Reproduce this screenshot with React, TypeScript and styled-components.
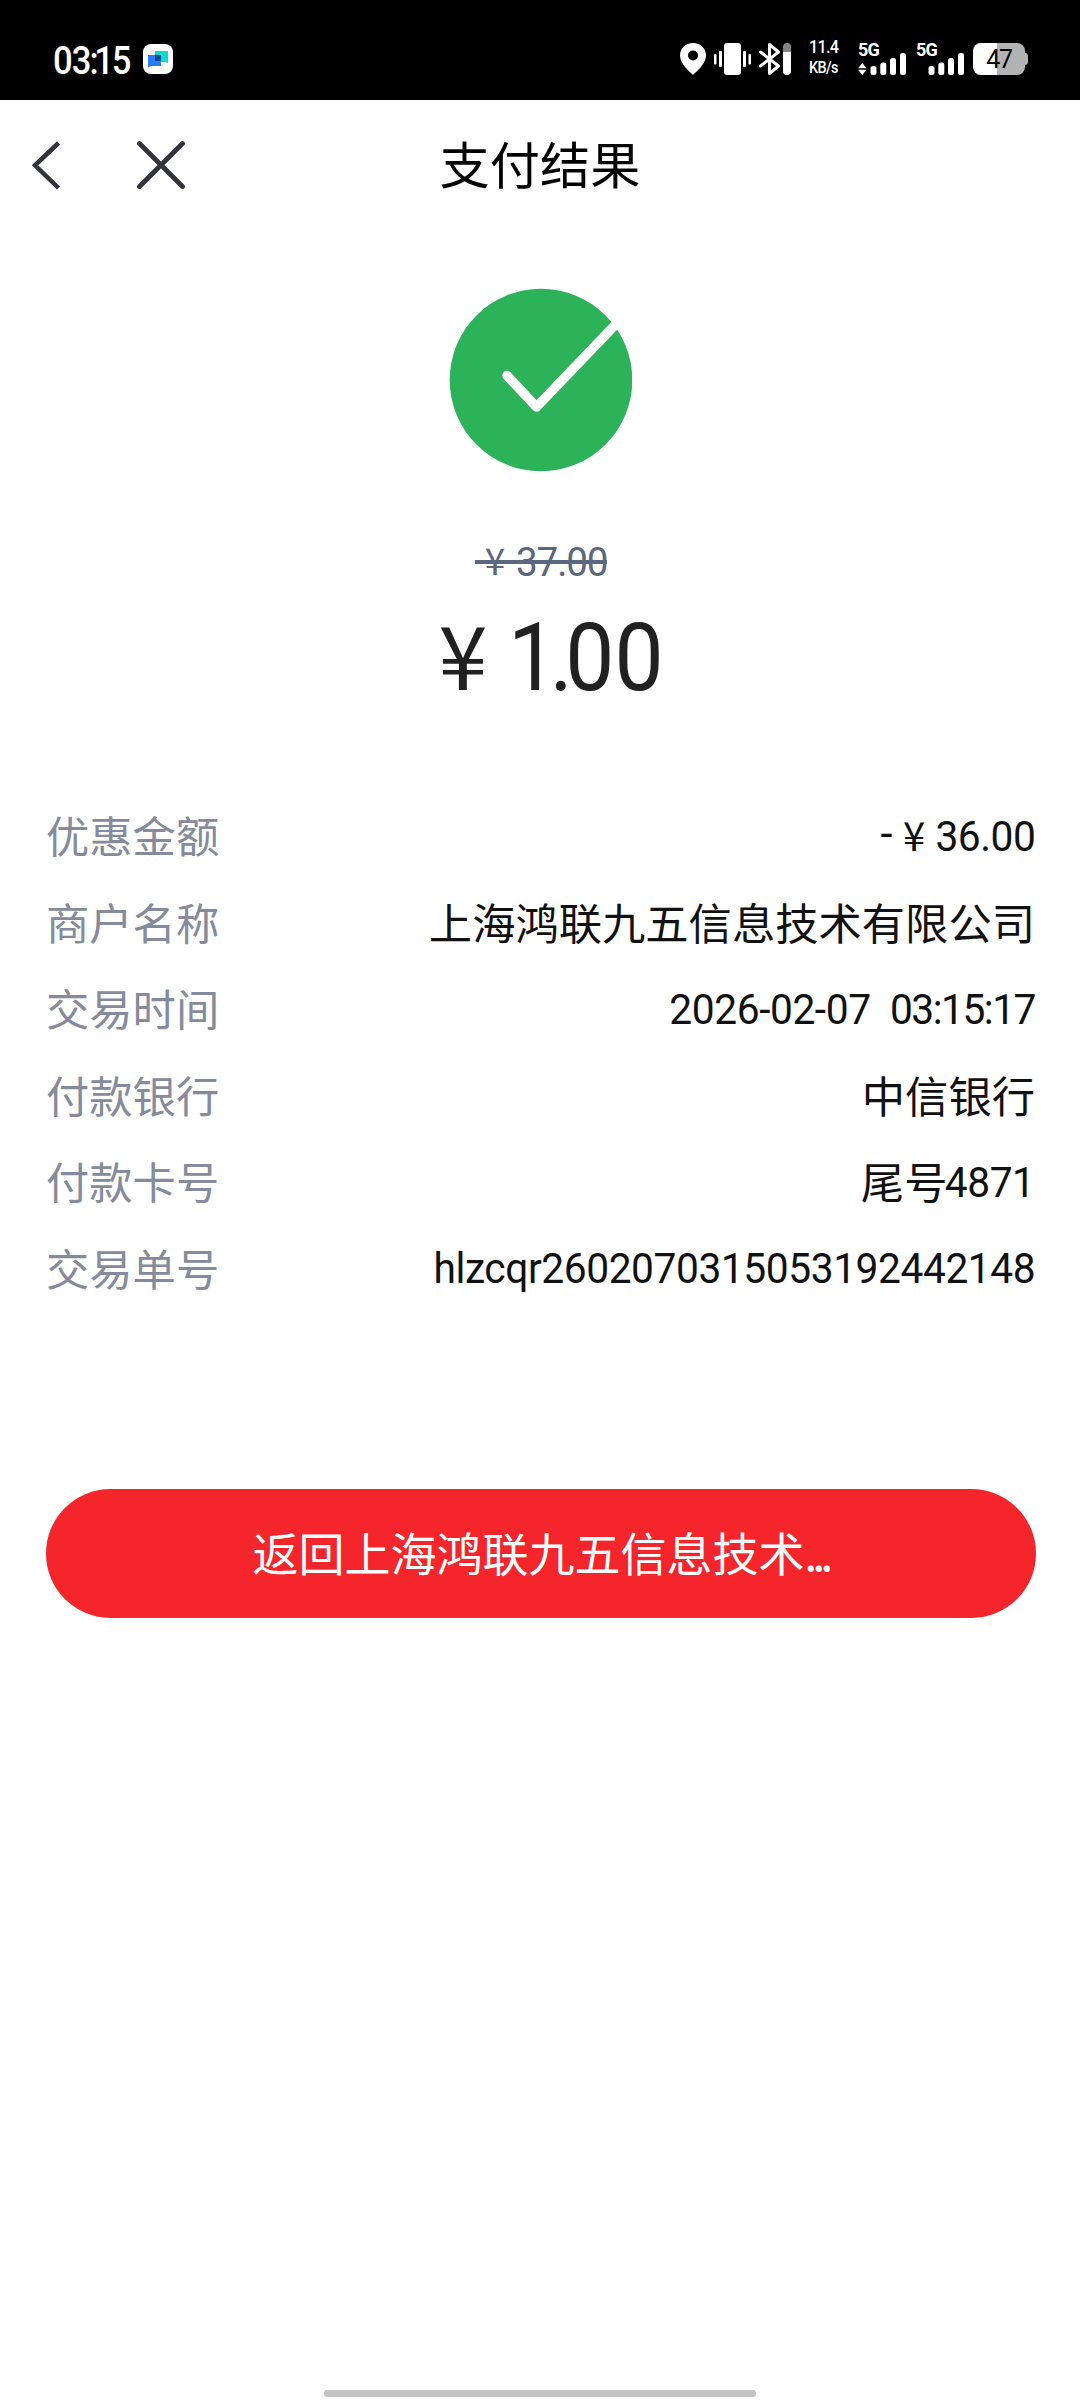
import React from "react";
import styled, { createGlobalStyle, css } from "styled-components";

const GlobalStyle = createGlobalStyle`
  * { box-sizing: border-box; }
  html, body { margin: 0; padding: 0; background: #fff; }
  body { font-family: "Noto Sans CJK SC", "Noto Sans", sans-serif; }
`;

const latin = css`
  font-family: Roboto, "Noto Sans CJK SC", sans-serif;
`;

const Screen = styled.main`
  width: 1080px;
  height: 2400px;
  display: flex;
  flex-direction: column;
  align-items: center;
  background: #fff;
  overflow: hidden;
`;

const StatusBar = styled.header`
  ${latin}
  width: 100%;
  height: 100px;
  flex: none;
  display: flex;
  align-items: flex-start;
  padding: 40px 50px 0 53px;
  background: #000;
  color: #fff;
`;

const Clock = styled.span`
  display: flex;
  width: 90px;
  height: 40px;
  margin-top: 1px;
  font-size: 38px;
  line-height: 40px;
  font-weight: 500;
  letter-spacing: -1px;
  white-space: nowrap;
  transform: scaleX(0.91);
  transform-origin: left center;
`;

const ClockColon = styled.span`
  margin: 0 -4px 0 -1px;
`;

const ClockMinutes = styled.span`
  letter-spacing: -2.2px;
`;

const StatusIcons = styled.div`
  margin-left: auto;
  display: flex;
  align-items: flex-start;
`;

const Glyph = styled.svg<{ $gap?: number }>`
  display: block;
  flex: none;
  margin-left: ${(p) => p.$gap ?? 0}px;
`;

const NetSpeed = styled.div`
  width: 32px;
  margin-left: 17px;
  display: flex;
  flex-direction: column;
  font-weight: 500;
  white-space: nowrap;
  transform: scaleX(0.9);
  transform-origin: left center;
`;

const SpeedValue = styled.span`
  font-size: 18px;
  line-height: 14px;
  height: 21px;
  letter-spacing: -0.8px;
`;

const SpeedUnit = styled.span`
  font-size: 16px;
  line-height: 14px;
  letter-spacing: -0.7px;
`;

const Network = styled.div<{ $gap: number }>`
  width: 49px;
  margin-left: ${(p) => p.$gap}px;
  margin-top: 3px;
  display: flex;
  flex-direction: column;
`;

const NetworkType = styled.span`
  height: 10px;
  font-size: 18px;
  line-height: 13px;
  font-weight: 700;
  letter-spacing: -0.8px;
`;

const Battery = styled.div`
  position: relative;
  width: 52px;
  height: 32px;
  margin: 3px 5px 0 8px;
  display: flex;
  align-items: center;
  justify-content: center;
  border-radius: 8px;
  background: linear-gradient(to right, #fff 24px, #b3b3b3 24px);
  color: #000;
  font-size: 25px;
  line-height: 33px;
  letter-spacing: -1.3px;

  &::after {
    content: "";
    position: absolute;
    left: 52px;
    top: 10px;
    width: 3px;
    height: 12px;
    border-radius: 0 3px 3px 0;
    background: #b3b3b3;
  }
`;

const NavBar = styled.nav`
  width: 100%;
  height: 130px;
  flex: none;
  display: grid;
  grid-template-columns: 300px 1fr 300px;
  align-items: center;
`;

const NavActions = styled.div`
  display: flex;
  align-items: center;
  gap: 76px;
  padding-left: 31px;
`;

const NavButton = styled.button`
  display: flex;
  padding: 0;
  border: 0;
  background: none;
`;

const Title = styled.h1`
  margin: 0;
  padding-bottom: 6px;
  text-align: center;
  font-size: 50.2px;
  line-height: 60px;
  font-weight: 400;
  color: #000;
`;

const ResultIcon = styled.svg`
  display: block;
  flex: none;
  margin-top: 58px;
`;

const OriginalPrice = styled.div`
  width: 132px;
  margin: 65px 0 0 2px;
  height: 50px;
  padding-bottom: 6px;
  display: flex;
  align-items: center;
  font-weight: 400;
  color: #5b6680;
  background: linear-gradient(#5b6680, #5b6680) 0 23px / 100% 4px no-repeat;
`;

const OriginalValue = styled.span`
  ${latin}
  flex: none;
  margin-left: 1px;
  padding-top: 5px;
  font-size: 41.5px;
  line-height: 50px;
  font-weight: 400;
  letter-spacing: -1.2px;
  transform: scaleX(0.93);
  transform-origin: left center;
`;

const Amount = styled.div`
  width: 246px;
  margin-top: 15px;
  height: 100px;
  display: flex;
  align-items: center;
  line-height: 100px;
  color: #212121;
`;

const AmountValue = styled.span`
  ${latin}
  flex: none;
  margin-left: -1px;
  padding-top: 12px;
  font-size: 94px;
  transform: scaleX(0.93);
  transform-origin: left center;
`;

const AmountWhole = styled.span`
  letter-spacing: -8px;
`;

const Yen = styled.span<{ $box: number; $size: number }>`
  flex: none;
  width: ${(p) => p.$box}px;
  font-size: ${(p) => p.$size}px;
  text-align: center;
`;

const Details = styled.dl`
  width: 100%;
  margin: 89px 0 0;
  padding: 0 45px 0 46px;
  display: flex;
  flex-direction: column;
`;

const Row = styled.div`
  height: 86.5px;
  display: flex;
  align-items: center;
  justify-content: space-between;
  font-size: 43.3px;
  line-height: 60px;
  white-space: nowrap;
`;

const Label = styled.dt`
  font-weight: 400;
  color: #858b9c;
`;

const Value = styled.dd`
  margin: 0;
  display: flex;
  align-items: center;
  white-space: pre;
  color: #111;
`;

const Minus = styled.span`
  ${latin}
`;

const Digits = styled.span<{ $pull?: number }>`
  ${latin}
  margin-left: ${(p) => -(p.$pull ?? 0)}px;
  padding-top: 5px;
  letter-spacing: -0.45px;
  transform: scaleX(0.94);
  transform-origin: right center;
`;

const Time = styled.span`
  letter-spacing: -1.6px;
`;

const ReturnButton = styled.button`
  width: 990px;
  height: 129px;
  flex: none;
  margin: 179px 0 0 1px;
  padding: 0 0 5px;
  border: 0;
  border-radius: 65px;
  background: #f5252c;
  color: #fff;
  font: inherit;
  font-size: 46px;
  font-weight: 400;
  line-height: 60px;
`;

const Dots = styled.span`
  letter-spacing: -4.8px;
`;

const HomeIndicator = styled.div`
  width: 432px;
  height: 7px;
  flex: none;
  margin: auto 0 3px;
  border-radius: 4px;
  background: #c3c3c3;
`;

function SignalBars({ arrows }: { arrows?: boolean }) {
  return (
    <Glyph width={49} height={22} viewBox="0 0 49 22" fill="#fff">
      {arrows && <path d="M4.3 10 8.6 15.2H0zM0 16.8h8.6L4.3 22z" />}
      <rect x={12.5} y={13} width={6} height={9} rx={2.5} />
      <rect x={22.3} y={9.5} width={6} height={12.5} rx={2.5} />
      <rect x={32} y={5} width={6} height={17} rx={2.5} />
      <rect x={42} y={0} width={6} height={22} rx={2.5} />
    </Glyph>
  );
}

interface Detail {
  label: string;
  value: React.ReactNode;
}

const details: Detail[] = [
  {
    label: "优惠金额",
    value: (
      <>
        <Minus>-</Minus>
        <Yen $box={43} $size={40}>¥</Yen>
        <Digits $pull={7}>36.00</Digits>
      </>
    ),
  },
  { label: "商户名称", value: "上海鸿联九五信息技术有限公司" },
  {
    label: "交易时间",
    value: (
      <Digits>
        2026-02-07{"  "}
        <Time>03:15:17</Time>
      </Digits>
    ),
  },
  { label: "付款银行", value: "中信银行" },
  {
    label: "付款卡号",
    value: (
      <>
        尾号<Digits $pull={8}>4871</Digits>
      </>
    ),
  },
  { label: "交易单号", value: <Digits>hlzcqr2602070315053192442148</Digits> },
];

export default function App() {
  return (
    <Screen>
      <GlobalStyle />
      <StatusBar>
        <Clock>
          03<ClockColon>:</ClockColon>
          <ClockMinutes>15</ClockMinutes>
        </Clock>
        <Glyph width={30} height={38} viewBox="0 0 30 38">
          <rect y={4} width={30} height={30} rx={8} fill="#fff" />
          <path d="M12 11h13v12l-3-1H12z" fill="#08dcd0" />
          <path d="M5 15h13v11H8l-3 1.5z" fill="#267df5" />
          <rect x={12} y={15} width={6} height={6} fill="#08488f" />
        </Glyph>
        <StatusIcons>
          <Glyph width={26} height={38} viewBox="0 0 26 38" fill="#fff">
            <path
              fillRule="evenodd"
              d="M13 3C5.5 3 0 8.5 0 15.5 0 24 9 31 13 35c4-4 13-11 13-19.5C26 8.5 20.5 3 13 3zm0 7.5a5 5 0 1 1 0 10 5 5 0 0 1 0-10z"
            />
          </Glyph>
          <Glyph $gap={8} width={37} height={38} viewBox="0 0 37 38" fill="#fff">
            <rect x={0} y={14} width={2.5} height={10.5} rx={1} />
            <rect x={5} y={11} width={3} height={16} rx={1} />
            <rect x={10} y={3} width={17} height={32} rx={3} />
            <rect x={29} y={11} width={3} height={16} rx={1} />
            <rect x={34.5} y={14} width={2.5} height={10.5} rx={1} />
          </Glyph>
          <Glyph $gap={8} width={33} height={38} viewBox="0 0 33 38">
            <path
              d="M1.5 12 19.5 26l-9 7.5V4.5l9 7.5L1.5 26"
              fill="none"
              stroke="#fff"
              strokeWidth={3}
              strokeLinejoin="round"
              strokeLinecap="round"
            />
            <path d="M24 12V7a4 4 0 0 1 8 0v5z" fill="#858585" />
            <path d="M24 12h8v19a4 4 0 0 1-8 0z" fill="#fff" />
          </Glyph>
          <NetSpeed>
            <SpeedValue>11.4</SpeedValue>
            <SpeedUnit>KB/s</SpeedUnit>
          </NetSpeed>
          <Network $gap={17}>
            <NetworkType>5G</NetworkType>
            <SignalBars arrows />
          </Network>
          <Network $gap={9}>
            <NetworkType>5G</NetworkType>
            <SignalBars />
          </Network>
          <Battery>47</Battery>
        </StatusIcons>
      </StatusBar>

      <NavBar>
        <NavActions>
          <NavButton aria-label="返回">
            <svg width={30} height={50} viewBox="0 0 30 50">
              <path d="M27.5 3 4 25.3 27.5 48" fill="none" stroke="#33333d" strokeWidth={4.5} />
            </svg>
          </NavButton>
          <NavButton aria-label="关闭">
            <svg width={48} height={50} viewBox="0 0 48 50">
              <path
                d="M2.5 3.5 45.5 46.5M45.5 3.5 2.5 46.5"
                fill="none"
                stroke="#33333d"
                strokeWidth={4.8}
                strokeLinecap="round"
              />
            </svg>
          </NavButton>
        </NavActions>
        <Title>支付结果</Title>
      </NavBar>

      <ResultIcon width={184} height={184} viewBox="0 0 184 184">
        <circle cx={93} cy={92} r={91.3} fill="#2cb35a" />
        <path
          d="M59 87.5 88.5 119 169 35"
          fill="none"
          stroke="#fff"
          strokeWidth={9.5}
          strokeLinecap="round"
          strokeLinejoin="round"
        />
      </ResultIcon>

      <OriginalPrice>
        <Yen $box={40} $size={37}>¥</Yen>
        <OriginalValue>37.00</OriginalValue>
      </OriginalPrice>
      <Amount>
        <Yen $box={92} $size={88}>¥</Yen>
        <AmountValue>
          <AmountWhole>1.</AmountWhole>00
        </AmountValue>
      </Amount>

      <Details>
        {details.map((d) => (
          <Row key={d.label}>
            <Label>{d.label}</Label>
            <Value>{d.value}</Value>
          </Row>
        ))}
      </Details>

      <ReturnButton>
        返回上海鸿联九五信息技术<Dots>...</Dots>
      </ReturnButton>
      <HomeIndicator />
    </Screen>
  );
}
